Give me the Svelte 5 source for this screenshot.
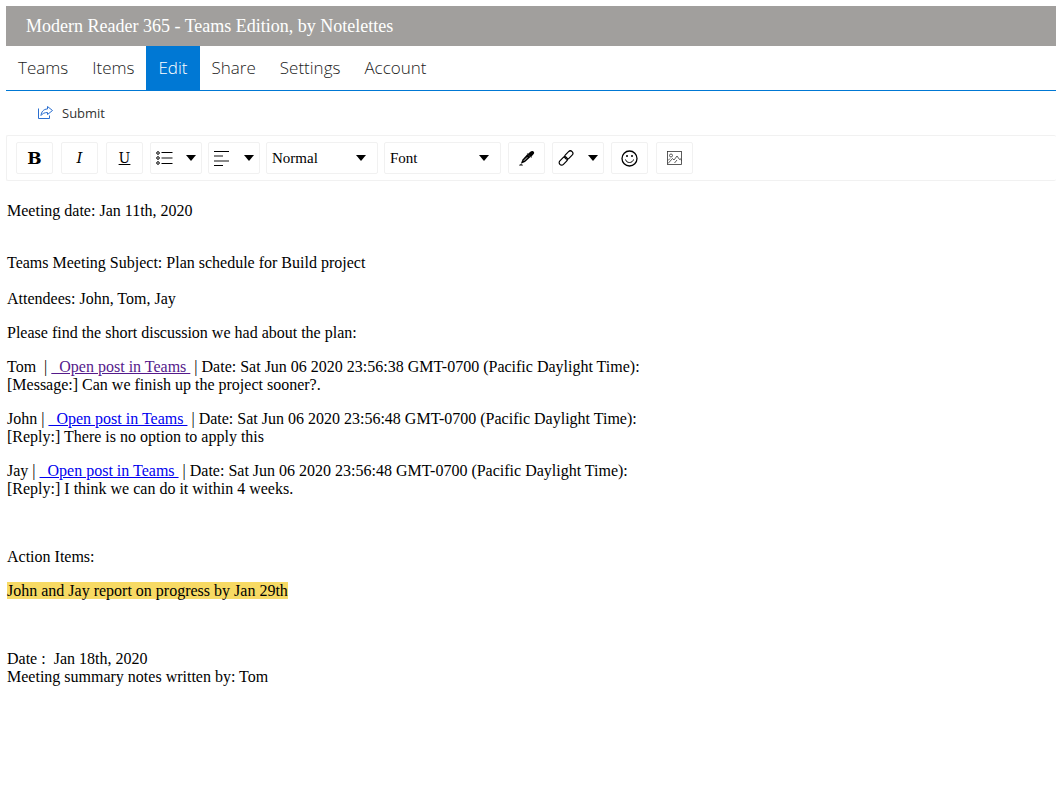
<script lang="ts">
    interface Post {
        author: string;
        visited: boolean;
        date: string;
        kind: string;
        text: string;
    }

    const tabs: string[] = ["Teams", "Items", "Edit", "Share", "Settings", "Account"];
    let activeTab = "Edit";

    let blockType = "Normal";
    let fontFamily = "Font";

    const posts: Post[] = [
        {author: "Tom\u00a0", visited: true, date: "Sat Jun 06 2020 23:56:38", kind: "Message", text: "Can we finish up the project sooner?."},
        {author: "John", visited: false, date: "Sat Jun 06 2020 23:56:48", kind: "Reply", text: "There is no option to apply this"},
        {author: "Jay", visited: false, date: "Sat Jun 06 2020 23:56:48", kind: "Reply", text: "I think we can do it within 4 weeks."}];

    const selectTab = (tab: string) => () => {
        activeTab = tab;
    };
</script>

<div class="page">
    <header>Modern Reader 365 - Teams Edition, by Notelettes</header>

    <nav>
        {#each tabs as tab}
            <a href="#{tab}" class:active={tab === activeTab} on:click={selectTab(tab)}>{tab}</a>
        {/each}
    </nav>

    <div class="commands">
        <button class="submit">
            <svg width="17" height="16" viewBox="0 0 17 16" fill="none" stroke="#2b6fd0">
                <path d="M1.500 3.500v10h11v-3" />
                <path d="M10.500 1.500l5 4-5 4V7.500C7.500 7.500 5.500 8.500 4 10.500 4.300 7 6.500 4 10.500 4z" stroke-linejoin="round" />
            </svg>
            Submit
        </button>
    </div>

    <div class="toolbar">
        <button class="option bold" aria-label="Bold">B</button>
        <button class="option italic" aria-label="Italic">I</button>
        <button class="option underline" aria-label="Underline">U</button>
        <button class="dropdown" aria-label="List">
            <svg width="17" height="14" viewBox="0 0 17 14" fill="none" stroke="#000">
                <circle cx="2" cy="2" r="1.300" />
                <circle cx="2" cy="7" r="1.300" />
                <circle cx="2" cy="12" r="1.300" />
                <path d="M5.500 1.500H16.500M5.500 12.500H16.500" />
                <path d="M5.500 7H16.500" stroke="#888" stroke-width="2" />
            </svg>
            <span class="caret"></span>
        </button>
        <button class="dropdown" aria-label="Text align">
            <svg width="16" height="16" viewBox="0 0 16 16" fill="none" stroke="#000">
                <path d="M0 1.500H15M0 15.500H9" />
                <path d="M0 6H9M0 11H15" stroke="#888" stroke-width="2" />
            </svg>
            <span class="caret"></span>
        </button>
        <div class="select block-type">
            <select bind:value={blockType} aria-label="Block type">
                <option>Normal</option>
                <option>H1</option>
                <option>H2</option>
                <option>Blockquote</option>
            </select>
            <span class="caret"></span>
        </div>
        <div class="select font-family">
            <select bind:value={fontFamily} aria-label="Font family">
                <option>Font</option>
                <option>Arial</option>
                <option>Georgia</option>
                <option>Verdana</option>
            </select>
            <span class="caret"></span>
        </div>
        <button class="option" aria-label="Color picker">
            <svg width="16" height="16" viewBox="0 0 16 16">
                <path d="M9.500 3.500C11 1.800 12 .7 13.500.9 15.300 1.100 15.600 2.800 14.700 4L12.500 6.500l.2 1.500-5-4.500z" fill="#000" />
                <path d="M8.500 4L3.500 9.500 1.800 13.700 6 12l5.500-5z" fill="#000" />
                <path d="M8.300 7.300L4.800 10.800" stroke="#fff" stroke-width=".8" />
                <path d="M0 15.500c.5-1.500 3.500-1.600 4 0z" fill="#000" />
            </svg>
        </button>
        <button class="dropdown" aria-label="Link">
            <svg width="16" height="16" viewBox="0 0 16 16" fill="none" stroke="#000" stroke-width="1.200">
                <rect x="6" y="2.500" width="9.500" height="5" rx="2.500" transform="rotate(-45 10.750 5)" />
                <rect x=".5" y="8.500" width="9.500" height="5" rx="2.500" transform="rotate(-45 5.250 11)" />
            </svg>
            <span class="caret"></span>
        </button>
        <button class="option" aria-label="Emoji">
            <svg width="17" height="17" viewBox="0 0 17 17" fill="none" stroke="#000">
                <circle cx="8.500" cy="8.500" r="7.500" stroke-width="1.300" />
                <path d="M4.500 9.500c1 4 7 4 8 0" />
                <circle cx="6" cy="6" r="1" fill="#000" stroke="none" />
                <circle cx="11" cy="6" r="1" fill="#000" stroke="none" />
            </svg>
        </button>
        <button class="option" aria-label="Image">
            <svg width="15" height="14" viewBox="0 0 15 14" fill="none" stroke="#333" stroke-width=".8">
                <rect x=".5" y=".5" width="14" height="13" />
                <circle cx="4" cy="4.500" r="1.500" />
                <path d="M1 12.500l4.500-5L7 9l3-4 2.500 3.500.8-.8 1.200 2M7.500 12L10 9M1 9.500l2-2" />
            </svg>
        </button>
    </div>

    <main>
        <p>Meeting date: Jan 11th, 2020</p>
        <br />
        <div>Teams Meeting Subject: Plan schedule for Build project</div>
        <br />
        <div>Attendees: John, Tom, Jay</div>
        <p>Please find the short discussion we had about the plan:</p>
        {#each posts as {author, visited, date, kind, text}}
            <p>
                {author} | <a href="#post" class:visited>&nbsp; Open post in Teams&nbsp;</a>&nbsp;| Date: {date} GMT-0700 (Pacific Daylight Time):<br />
                [{kind}:] {text}
            </p>
        {/each}
        <p>&nbsp;</p>
        <p>Action Items:</p>
        <p><mark>John and Jay report on progress by Jan 29th</mark></p>
        <p>&nbsp;</p>
        <p>
            Date :&nbsp; Jan 18th, 2020<br />
            Meeting summary notes written by: Tom
        </p>
    </main>
</div>

<style>
    :global(body) {
        margin: 0;
        background: #fff;
    }

    .page {
        padding: 6px 0 0 6px;
        color: #000;
        font-family: "Liberation Serif", "Times New Roman", serif;
        font-size: 16px;
        line-height: 18px;
    }

    header {
        padding: 0 20px;
        background: #a19f9d;
        color: #fff;
        font-size: 18px;
        line-height: 40px;
    }

    nav {
        display: flex;
        border-bottom: 1px solid #0078d4;
    }

    nav a {
        padding: 0 12px;
        color: #222;
        font-family: "Segoe UI", "Open Sans", sans-serif;
        font-size: 17px;
        font-weight: 300;
        line-height: 44px;
        text-decoration: none;
    }

    nav a.active {
        background: #0078d4;
        color: #fff;
    }

    button, select {
        margin: 0;
        padding: 0;
        border: none;
        background: none;
        color: inherit;
        font: inherit;
        cursor: pointer;
    }

    .commands {
        display: flex;
        height: 44px;
        padding-left: 31px;
    }

    .submit {
        display: flex;
        align-items: center;
        gap: 8px;
        color: #333;
        font-family: "Segoe UI", "Open Sans", sans-serif;
        font-size: 13px;
    }

    .toolbar {
        display: flex;
        flex-wrap: wrap;
        padding: 6px 5px;
        border: 1px solid #f1f1f1;
        border-right: none;
        border-radius: 2px;
        font-size: 15px;
    }

    .option, .dropdown, .select {
        display: flex;
        align-items: center;
        box-sizing: border-box;
        height: 32px;
        border: 1px solid #f1f1f1;
        border-radius: 2px;
    }

    .option {
        justify-content: center;
        width: 37px;
        margin: 0 4px;
        font-family: "DejaVu Serif", serif;
    }

    .bold {
        font-size: 17px;
        font-weight: bold;
    }

    .italic {
        font-style: italic;
    }

    .underline {
        font-size: 14px;
        text-decoration: underline;
    }

    .dropdown {
        justify-content: space-between;
        width: 52px;
        margin: 0 3px;
        padding: 0 5px;
    }

    .select {
        position: relative;
        margin: 0 3px;
    }

    .block-type {
        width: 112px;
    }

    .font-family {
        width: 117px;
    }

    .select select {
        appearance: none;
        width: 100%;
        height: 100%;
        padding-left: 5px;
    }

    .select .caret {
        position: absolute;
        right: 11px;
        pointer-events: none;
    }

    .caret {
        border: 5px solid transparent;
        border-top: 6px solid #000;
        border-bottom: none;
    }

    main {
        padding: 5px 1px;
    }

    p {
        margin: 16px 0;
    }

    main a {
        color: #0000ee;
    }

    main a.visited {
        color: #551a8b;
    }

    mark {
        background: #f7da64;
        color: inherit;
    }
</style>
